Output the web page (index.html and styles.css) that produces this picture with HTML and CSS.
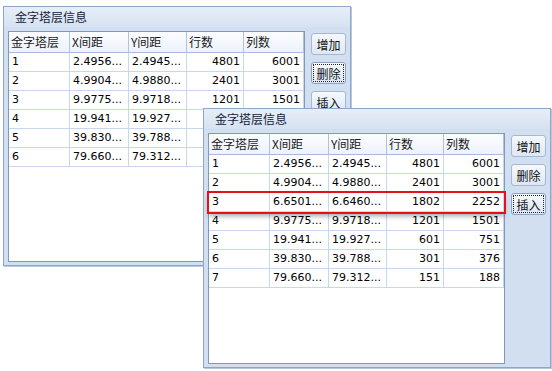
FILE: index.html
```html
<!DOCTYPE html>
<html lang="zh-CN">
<head>
    <meta charset="UTF-8" />
    <title>金字塔层信息</title>
    <link rel="stylesheet" href="styles.css">
</head>
<body>

    <!-- back window -->
    <div class="win win-back">
        <div class="win-title">金字塔层信息</div>
        <div class="win-body">
            <div class="grid">
                <div class="row head">
                    <div class="cell">金字塔层</div>
                    <div class="cell">X间距</div>
                    <div class="cell">Y间距</div>
                    <div class="cell">行数</div>
                    <div class="cell">列数</div>
                </div>
                <div class="row"><div class="cell">1</div><div class="cell">2.4956...</div><div class="cell">2.4945...</div><div class="cell num">4801</div><div class="cell num">6001</div></div>
                <div class="row"><div class="cell">2</div><div class="cell">4.9904...</div><div class="cell">4.9880...</div><div class="cell num">2401</div><div class="cell num">3001</div></div>
                <div class="row"><div class="cell">3</div><div class="cell">9.9775...</div><div class="cell">9.9718...</div><div class="cell num">1201</div><div class="cell num">1501</div></div>
                <div class="row"><div class="cell">4</div><div class="cell">19.941...</div><div class="cell">19.927...</div><div class="cell num">601</div><div class="cell num">751</div></div>
                <div class="row"><div class="cell">5</div><div class="cell">39.830...</div><div class="cell">39.788...</div><div class="cell num">301</div><div class="cell num">376</div></div>
                <div class="row"><div class="cell">6</div><div class="cell">79.660...</div><div class="cell">79.312...</div><div class="cell num">151</div><div class="cell num">188</div></div>
            </div>
            <div class="buttons">
                <button class="btn">增加</button>
                <button class="btn focus">删除</button>
                <button class="btn">插入</button>
            </div>
        </div>
    </div>

    <!-- front window -->
    <div class="win win-front">
        <div class="win-title">金字塔层信息</div>
        <div class="win-body">
            <div class="grid">
                <div class="row head">
                    <div class="cell">金字塔层</div>
                    <div class="cell">X间距</div>
                    <div class="cell">Y间距</div>
                    <div class="cell">行数</div>
                    <div class="cell">列数</div>
                </div>
                <div class="row"><div class="cell">1</div><div class="cell">2.4956...</div><div class="cell">2.4945...</div><div class="cell num">4801</div><div class="cell num">6001</div></div>
                <div class="row"><div class="cell">2</div><div class="cell">4.9904...</div><div class="cell">4.9880...</div><div class="cell num">2401</div><div class="cell num">3001</div></div>
                <div class="row selected"><div class="cell">3</div><div class="cell">6.6501...</div><div class="cell">6.6460...</div><div class="cell num">1802</div><div class="cell num">2252</div></div>
                <div class="row"><div class="cell">4</div><div class="cell">9.9775...</div><div class="cell">9.9718...</div><div class="cell num">1201</div><div class="cell num">1501</div></div>
                <div class="row"><div class="cell">5</div><div class="cell">19.941...</div><div class="cell">19.927...</div><div class="cell num">601</div><div class="cell num">751</div></div>
                <div class="row"><div class="cell">6</div><div class="cell">39.830...</div><div class="cell">39.788...</div><div class="cell num">301</div><div class="cell num">376</div></div>
                <div class="row"><div class="cell">7</div><div class="cell">79.660...</div><div class="cell">79.312...</div><div class="cell num">151</div><div class="cell num">188</div></div>
            </div>
            <div class="buttons">
                <button class="btn">增加</button>
                <button class="btn">删除</button>
                <button class="btn focus">插入</button>
            </div>
        </div>
    </div>

</body>
</html>
```

FILE: styles.css
```css
body {
    margin: 0;
    width: 552px;
    height: 371px;
    background-color: #ffffff;
    font-family: 'DejaVu Sans', 'Noto Sans CJK SC', sans-serif;
    font-size: 11px;
    color: #000;
    position: relative;
    overflow: hidden;
}

/* windows sit on a free canvas */
.win {
    position: absolute;
    width: 348px;
    height: 260px;
    box-sizing: border-box;
    border: 1px solid #8ea6c8;
    background-color: #d2dff0;
    box-shadow: 1px 1px 0 #b9c8dc;
}

.win-back {
    left: 3px;
    top: 6px;
}

.win-front {
    left: 203px;
    top: 108px;
}

.win-title {
    height: 20px;
    line-height: 20px;
    padding-left: 11px;
    font-family: 'Noto Sans CJK SC', sans-serif;
    font-size: 12px;
    color: #15233a;
    background: linear-gradient(#e7eef8, #d6e2f2);
}

.win-body {
    display: flex;
    padding: 4px 0 0 4px;
}

.grid {
    width: 297px;
    height: 231px;
    box-sizing: border-box;
    border: 1px solid #7f99bd;
    background-color: #ffffff;
}

.row {
    display: grid;
    grid-template-columns: 61px 59px 58px 57px 60px;
    height: 19px;
}

.cell {
    box-sizing: border-box;
    border-right: 1px solid #c6d8ef;
    border-bottom: 1px solid #c6d8ef;
    padding: 0 3px;
    line-height: 18px;
    white-space: nowrap;
    overflow: hidden;
}

.cell.num {
    text-align: right;
}

.row.head {
    height: 21px;
}

.head .cell {
    font-family: 'Noto Sans CJK SC', sans-serif;
    font-size: 12px;
    line-height: 20px;
    padding-left: 2px;
    color: #1a1a1a;
    background: linear-gradient(#fcfdff, #edf3fb);
    border-right: 1px solid #afc3de;
    border-bottom: 1px solid #a6bcd9;
}

.row.selected {
    position: relative;
    z-index: 1;
    outline: 2px solid #e3111b;
    box-shadow: 0 4px 5px rgba(0, 0, 0, 0.35);
    background-color: #ffffff;
}

.buttons {
    display: flex;
    flex-direction: column;
    gap: 7px;
    margin-left: 6px;
    padding-top: 2px;
}

.btn {
    width: 35px;
    height: 22px;
    padding: 0;
    font-family: 'Noto Sans CJK SC', sans-serif;
    font-size: 12px;
    color: #111;
    border: 1px solid #a6b8d2;
    border-radius: 3px;
    background: linear-gradient(#f6f9fd, #dde7f4);
}

.btn.focus {
    border-color: #8da2c0;
    outline: 1px dotted #222;
    outline-offset: -3px;
}
```
